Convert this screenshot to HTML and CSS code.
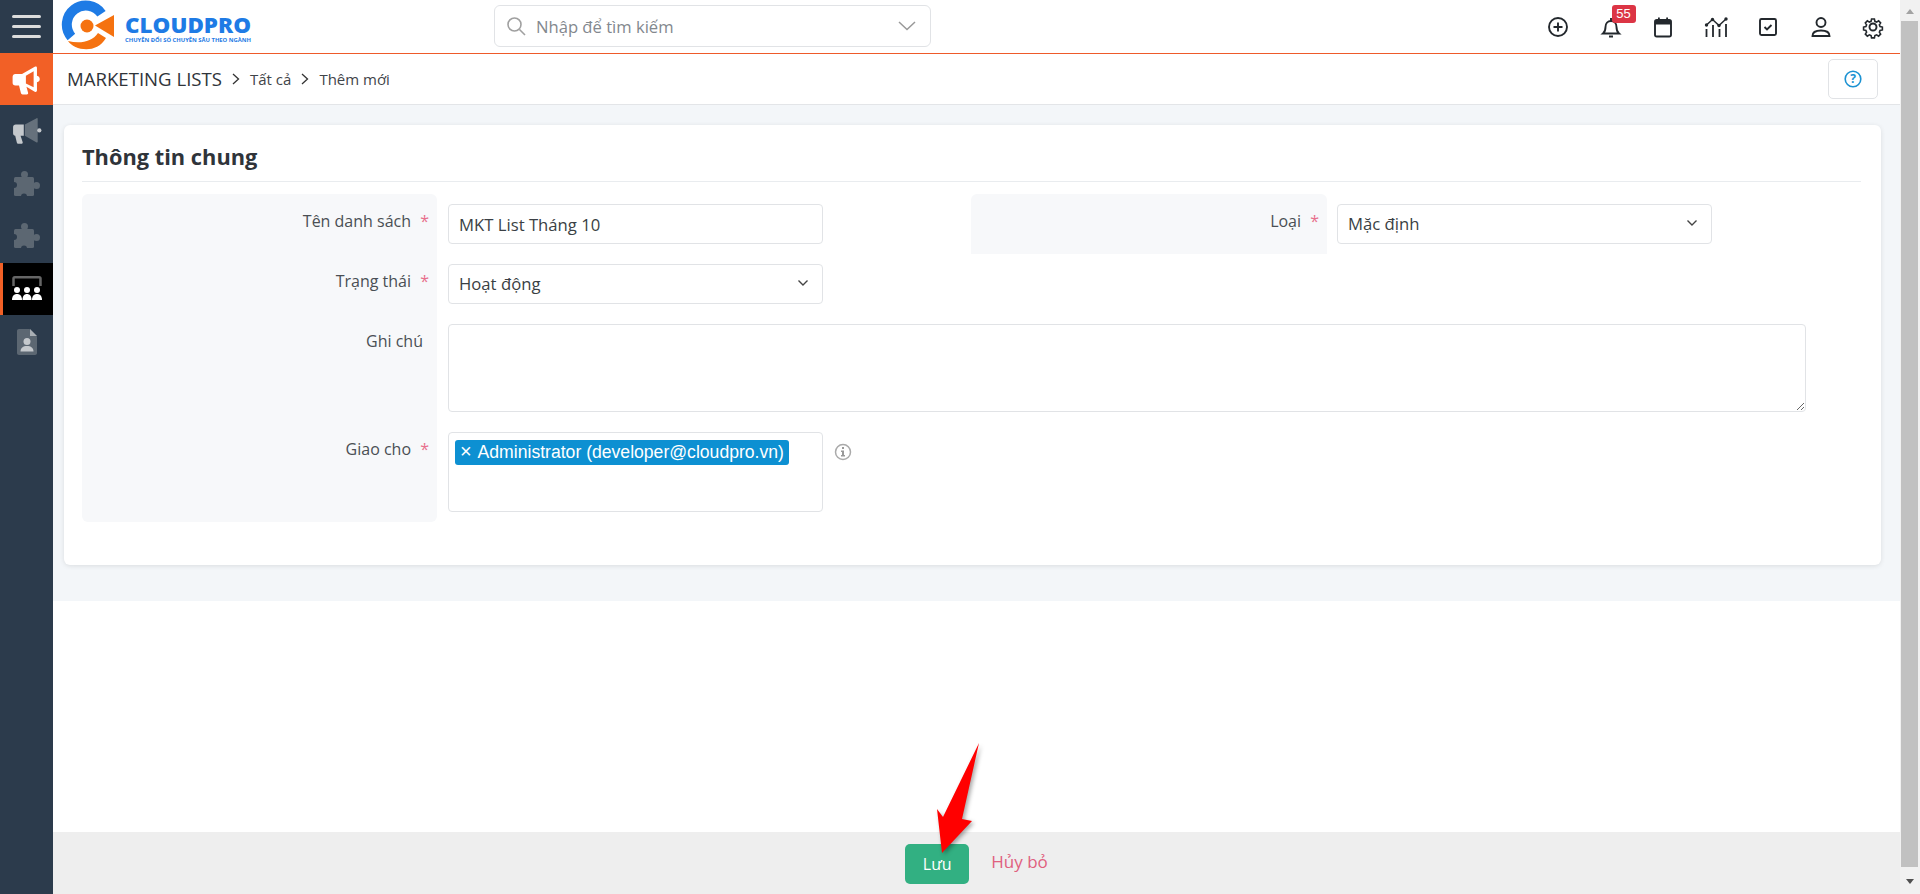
FILE: index.html
```html
<!DOCTYPE html>
<html>
<head>
<meta charset="UTF-8">
    <title>CloudPro - Marketing Lists</title>
    <link rel="stylesheet" href="styles.css">
</head>
<body>
    <div class="sidebar">
        <div class="menu-btn"><span></span><span></span><span></span></div>
        <div class="side-item active-module">
            <svg width="32" height="31" viewBox="0 0 28 28"><path fill="#fff" d="M1 11.500c0-1.500 1-2.500 2.500-2.500h6L21 2.500c1-.5 2-.2 2 1v7c1.800.5 2.500 1.500 2.500 3s-.7 2.500-2.500 3v7.500c0 1-1 1.500-2 1l-7.500-4.500 1.500 5.500c.2 1-.3 1.500-1.200 1.500H10c-.8 0-1.300-.4-1.500-1.200L6.800 19.500H3.500C2 19.500 1 18.500 1 17z"/><path fill="#f26026" d="M13 10.500l7-4v14.500l-7-3.500z"/></svg>
        </div>
        <div class="side-item">
            <svg width="30" height="30" viewBox="0 0 28 28"><path fill="#c4c8cc" d="M1 10.500C1 9 2 8 3.500 8H11v10.500H8l2 6c.2.800-.3 1.500-1.200 1.500H6c-.8 0-1.300-.4-1.500-1.200L3 18.500C1.800 18.200 1 17.300 1 16z"/><path fill="#66717c" d="M12 8l11-6c.6-.3 1 .1 1 .7V24c0 .6-.4 1-1 .7l-11-6.200z"/><circle cx="25.500" cy="13.500" r="2" fill="#c4c8cc"/></svg>
        </div>
        <div class="side-item">
            <svg width="28" height="28" viewBox="0 0 28 28"><g fill="#5c6772"><rect x="1" y="7" width="20" height="19" rx="1.500"/><circle cx="11.500" cy="4.500" r="3.500"/><circle cx="23.500" cy="15.500" r="3.500"/></g><circle cx="1" cy="15" r="3" fill="#2c3b4c"/><circle cx="11" cy="26.500" r="3" fill="#2c3b4c"/></svg>
        </div>
        <div class="side-item">
            <svg width="28" height="28" viewBox="0 0 28 28"><g fill="#5c6772"><rect x="1" y="7" width="20" height="19" rx="1.500"/><circle cx="11.500" cy="4.500" r="3.500"/><circle cx="23.500" cy="15.500" r="3.500"/></g><circle cx="1" cy="15" r="3" fill="#2c3b4c"/><circle cx="11" cy="26.500" r="3" fill="#2c3b4c"/></svg>
        </div>
        <div class="side-item current">
            <svg width="32" height="28" viewBox="0 0 32 28"><path fill="none" stroke="#666" stroke-width="2.500" d="M2.500 11V3.500c0-.8.500-1.300 1.300-1.300h24.400c.8 0 1.300.5 1.300 1.300V11"/><g fill="#fff"><circle cx="6" cy="15" r="3"/><path d="M1 25c0-4 2-6 5-6s5 2 5 6z"/><circle cx="16" cy="15" r="3"/><path d="M11.500 25c0-4 1.800-6 4.500-6s4.500 2 4.500 6z"/><circle cx="26" cy="15" r="3"/><path d="M21 25c0-4 2-6 5-6s5 2 5 6z"/></g></svg>
        </div>
        <div class="side-item">
            <svg width="22" height="28" viewBox="0 0 22 28"><path fill="#5c6772" d="M3 1h10.500L21 8.500V25c0 1.200-.8 2-2 2H3c-1.200 0-2-.8-2-2V3c0-1.200.8-2 2-2z"/><path fill="#a9afb5" d="M14 1l7 7h-7z"/><circle cx="11" cy="13.500" r="3.500" fill="#c4c8cc"/><path fill="#c4c8cc" d="M4.500 23.500c0-3.500 2.500-5.500 6.500-5.500s6.500 2 6.500 5.500z"/></svg>
        </div>
    </div>

    <div class="main">
        <div class="topbar">
            <svg class="logo" width="196" height="53" viewBox="0 0 196 53">
                <path fill="none" stroke="#1e7be5" stroke-width="10" d="M41.500 13.800A19 19 0 1 0 11.400 36.900"/>
                <path fill="#f57210" d="M8 41c6 9 28 14 38-3l-8-5c-6 9-18 11-30 8z"/>
                <circle cx="27" cy="26" r="6.500" fill="#f57210"/>
                <path fill="#f57210" d="M35 25.500L54 15v22z"/>
                <text class="logo-name" x="65" y="33" textLength="126" lengthAdjust="spacingAndGlyphs">CLOUDPRO</text>
                <text class="logo-sub" x="65" y="42" textLength="126" lengthAdjust="spacingAndGlyphs">CHUYÊN ĐỔI SỐ CHUYÊN SÂU THEO NGÀNH</text>
            </svg>
            <div class="search">
                <svg width="20" height="20" viewBox="0 0 20 20" fill="none" stroke="#a0a0a0" stroke-width="1.600"><circle cx="8.500" cy="8.500" r="6.500"/><path d="M13.500 13.500L19 19"/></svg>
                <span class="search-text">Nhập để tìm kiếm</span>
                <svg class="search-caret" width="18" height="10" viewBox="0 0 18 10" fill="none" stroke="#999" stroke-width="1.500"><path d="M1 1l8 7.500L17 1"/></svg>
            </div>
            <div class="top-icons">
                <svg width="24" height="24" viewBox="0 0 24 24" fill="none" stroke="#23282d" stroke-width="1.900"><circle cx="12" cy="12" r="9"/><path d="M12 7.500v9M7.500 12h9"/></svg>
                <div class="bell">
                    <svg width="24" height="24" viewBox="0 0 24 24" fill="none" stroke="#23282d" stroke-width="1.900"><path d="M4 18.500c1.800-1.500 2.500-3 2.500-6.500 0-3.700 2.300-6 5.500-6s5.500 2.300 5.500 6c0 3.500.7 5 2.500 6.500z"/><path d="M12 3v3M10 21.500h4"/></svg>
                    <span class="badge">55</span>
                </div>
                <svg width="24" height="24" viewBox="0 0 24 24"><rect x="4" y="5" width="16" height="16.500" rx="1.800" fill="none" stroke="#23282d" stroke-width="1.900"/><path fill="#23282d" d="M4 5h16v4.500H4zM7 2.500h1.800V5H7zM15.200 2.500H17V5h-1.800z"/></svg>
                <svg width="24" height="24" viewBox="0 0 24 24" fill="none" stroke="#23282d" stroke-width="1.800"><path d="M2.500 10L8.500 4.500l6.500 6 7-6.500" stroke-width="1.500"/><path d="M2.500 14v8M9 10v12M15.500 14v8M22 9v13"/><g fill="#23282d" stroke="none"><circle cx="2.500" cy="10" r="1.700"/><circle cx="8.500" cy="4.500" r="1.700"/><circle cx="15" cy="10.500" r="1.700"/><circle cx="22" cy="4" r="1.700"/></g></svg>
                <svg width="24" height="24" viewBox="0 0 24 24" fill="none" stroke="#23282d" stroke-width="1.900"><rect x="4" y="4" width="16" height="16" rx="1.500"/><path d="M8.500 12l2.500 2.500 4.500-4.500"/></svg>
                <svg width="24" height="24" viewBox="0 0 24 24" fill="none" stroke="#23282d" stroke-width="1.900"><circle cx="12" cy="7.500" r="4.500"/><path d="M3.500 21c0-4 3-5.500 8.500-5.500s8.500 1.500 8.500 5.500z"/></svg>
                <svg width="24" height="24" viewBox="0 0 24 24" fill="none" stroke="#23282d" stroke-width="1.900"><circle cx="12" cy="12" r="3.500"/><path d="M10.300 2.500h3.400l.6 2.800 2 .9 2.400-1.500 2.400 2.400-1.500 2.400.8 2 2.800.6v3.400l-2.800.6-.8 2 1.500 2.400-2.400 2.400-2.400-1.500-2 .8-.6 2.800h-3.400l-.6-2.800-2-.8-2.400 1.500-2.400-2.400 1.500-2.400-.8-2-2.800-.6v-3.400l2.800-.6.800-2-1.500-2.400 2.400-2.400 2.400 1.500 2-.9z" transform="translate(1.900 1.900) scale(.84)"/></svg>
            </div>
        </div>

        <div class="crumbbar">
            <span class="crumb-title">MARKETING LISTS</span>
            <svg class="crumb-sep" width="8" height="12" viewBox="0 0 8 12" fill="none" stroke="#333" stroke-width="1.300"><path d="M1 1l5.500 5L1 11"/></svg>
            <span class="crumb-link">Tất cả</span>
            <svg class="crumb-sep" width="8" height="12" viewBox="0 0 8 12" fill="none" stroke="#333" stroke-width="1.300"><path d="M1 1l5.500 5L1 11"/></svg>
            <span class="crumb-link">Thêm mới</span>
            <button class="help-btn">
                <svg width="20" height="20" viewBox="0 0 20 20"><circle cx="10" cy="10" r="7.800" fill="none" stroke="#1c92d2" stroke-width="1.600"/><text class="help-mark" x="10" y="14">?</text></svg>
            </button>
        </div>

        <div class="content">
            <div class="card">
                <h2 class="card-title">Thông tin chung</h2>
                <div class="form-grid">
                    <div class="label-cell first">Tên danh sách <span class="req">*</span></div>
                    <div class="control"><input class="field" type="text" value="MKT List Tháng 10"></div>
                    <div class="label-cell single">Loại <span class="req">*</span></div>
                    <div class="control last">
                        <div class="field select">Mặc định
                            <svg width="12" height="8" viewBox="0 0 12 8" fill="none" stroke="#444" stroke-width="1.400"><path d="M1.500 1.500l4.500 4.500 4.500-4.500"/></svg>
                        </div>
                    </div>

                    <div class="label-cell">Trạng thái <span class="req">*</span></div>
                    <div class="control wide">
                        <div class="field select">Hoạt động
                            <svg width="12" height="8" viewBox="0 0 12 8" fill="none" stroke="#444" stroke-width="1.400"><path d="M1.500 1.500l4.500 4.500 4.500-4.500"/></svg>
                        </div>
                    </div>

                    <div class="label-cell note">Ghi chú</div>
                    <div class="control wide"><textarea class="notes"></textarea></div>

                    <div class="label-cell final">Giao cho <span class="req">*</span></div>
                    <div class="control wide assign">
                        <div class="tagbox">
                            <span class="tag"><span class="tag-x">×</span> Administrator (developer@cloudpro.vn)</span>
                        </div>
                        <svg class="info" width="18" height="18" viewBox="0 0 18 18"><circle cx="9" cy="9" r="7.500" fill="none" stroke="#aaa" stroke-width="1.500"/><path fill="#999" d="M8 4h2v2H8zM7 7.500h3V12h1v1.500H7V12h1V9H7z"/></svg>
                    </div>
                </div>
            </div>
        </div>

        <div class="footer">
            <button class="save-btn">Lưu</button>
            <a class="cancel" href="#">Hủy bỏ</a>
        </div>
    </div>

    <div class="scrollbar">
        <div class="scroll-btn"><span class="arrow-up"></span></div>
        <div class="scroll-thumb"></div>
        <div class="scroll-btn bottom"><span class="arrow-down"></span></div>
    </div>

    <svg class="pointer" width="70" height="130" viewBox="0 0 70 130">
        <path fill="#f00" d="M54 3L37 79l10 2-30 32-5-44 6 8z"/>
    </svg>
</body>
</html>
```

FILE: styles.css
```css
* { box-sizing: border-box; }
html, body { height: 100%; }
body { margin: 0; display: flex; overflow: hidden; font-family: "Open Sans", "Noto Sans", sans-serif; font-size: 16px; color: #3a3f44; background: #fff; }

.sidebar { width: 53px; flex: none; background: #2c3b4c; }
.menu-btn { height: 53px; padding: 15px 12px 0; display: flex; flex-direction: column; gap: 7px; }
.menu-btn span { display: block; height: 3px; background: #dcdcdc; border-radius: 2px; }
.side-item { height: 52.6px; display: flex; align-items: center; justify-content: center; }
.side-item.active-module { height: 52px; background: #f26026; }
.side-item.current { background: #000; border-left: 3px solid #f26026; padding-right: 3px; }

.main { width: 1847px; flex: none; display: flex; flex-direction: column; }

.topbar { height: 54px; flex: none; display: flex; align-items: center; border-bottom: 1px solid #ee5a2a; padding-right: 15px; }
.logo { margin-left: 7px; flex: none; }
.logo-name { font-family: "Open Sans", sans-serif; font-weight: 800; font-size: 21px; fill: #1e7be5; }
.logo-sub { font-family: "Open Sans", sans-serif; font-weight: 700; font-size: 6px; fill: #1e7be5; }
.search { width: 437px; height: 42px; margin: 0 0 1px 238px; display: flex; align-items: center; border: 1px solid #e1e3e6; border-radius: 6px; padding: 0 14px 0 11px; }
.search-text { margin-left: 10px; font-size: 16.6px; color: #83888e; }
.search-caret { margin-left: auto; }
.top-icons { margin-left: auto; display: flex; align-items: center; gap: 28.5px; }
.bell { position: relative; height: 24px; }
.badge { position: absolute; left: 13px; top: -10px; width: 24px; height: 18px; background: #dc3545; color: #fff; border-radius: 3px; font-family: "Liberation Sans", sans-serif; font-size: 13px; line-height: 18px; text-align: center; }

.crumbbar { height: 51px; flex: none; display: flex; align-items: center; border-bottom: 1px solid #e3e5e8; padding: 0 22px 0 14px; }
.crumb-title { font-size: 18.6px; font-weight: 500; color: #2f343a; margin-bottom: 2px; }
.crumb-sep { margin: 0 10px; }
.crumb-link { font-size: 15px; color: #3f4449; }
.help-btn { margin-left: auto; width: 50px; height: 40px; background: #fff; border: 1px solid #e1e3e6; border-radius: 5px; padding: 0; display: flex; align-items: center; justify-content: center; }
.help-mark { font-family: "Open Sans", sans-serif; font-size: 12px; font-weight: 700; fill: #1c92d2; text-anchor: middle; }

.content { background: #f3f6f9; padding: 20px 19px 36px 11px; }
.card { height: 440px; background: #fff; border-radius: 6px; box-shadow: 0 1px 5px rgba(0,0,0,0.1); padding: 0 20px 0 18px; }
.card-title { margin: 0 0 12px; height: 57px; line-height: 63px; font-size: 21.8px; font-weight: 700; color: #2f343a; border-bottom: 1px solid #e9ecef; }

.form-grid { display: grid; grid-template-columns: 355px 534px 356px 1fr; grid-template-rows: 60px 60px 108px 100px; }
.label-cell { background: #f7f8fa; text-align: right; padding: 15px 8px 0 0; line-height: 24px; font-size: 16px; color: #4a4f54; }
.label-cell.first { border-radius: 6px 6px 0 0; }
.label-cell.final { border-radius: 0 0 6px 6px; }
.label-cell.single { border-radius: 6px 6px 0 0; }
.label-cell.note { padding-right: 14px; }
.req { color: #e8708c; margin-left: 5px; }
.control { padding: 10px 0 0 11px; }
.control.last { padding-left: 10px; }
.control.wide { grid-column: 2 / 5; }
.control.assign { display: flex; align-items: flex-start; }

.field { display: block; width: 375px; height: 40px; border: 1px solid #e1e3e6; border-radius: 4px; padding: 0 10px; font-family: inherit; font-size: 16.7px; color: #3a3f44; background: #fff; }
.select { display: flex; align-items: center; justify-content: space-between; padding-right: 13px; padding-bottom: 2px; }
.notes { display: block; width: 1358px; height: 88px; border: 1px solid #e1e3e6; border-radius: 4px; background: #fff; }
.tagbox { width: 375px; height: 80px; border: 1px solid #e1e3e6; border-radius: 4px; padding: 7px 6px; }
.tag { display: inline-block; height: 25px; line-height: 25px; background: #0d90d2; color: #fff; border-radius: 3px; padding: 0 5px; font-family: "Liberation Sans", sans-serif; font-size: 17.6px; white-space: nowrap; }
.tag-x { font-size: 20px; line-height: 20px; margin-right: 2px; }
.info { margin: 11px 0 0 11px; }

.footer { margin-top: auto; height: 62px; flex: none; background: #eee; display: flex; align-items: flex-start; justify-content: center; padding-top: 12px; gap: 22px; }
.save-btn { width: 64px; height: 40px; background: #32b082; color: #fff; border: none; border-radius: 5px; font-family: inherit; font-size: 16px; padding: 0; }
.cancel { line-height: 35px; font-size: 17px; color: #e0607e; text-decoration: none; }

.scrollbar { width: 20px; flex: none; background: #f1f1f1; display: flex; flex-direction: column; padding-left: 1px; padding-right: 2px; }
.scroll-btn { height: 21px; flex: none; display: flex; justify-content: center; padding-top: 9px; }
.scroll-btn.bottom { height: 27px; padding-top: 12px; }
.scroll-thumb { flex: 1; background: #c1c1c1; }
.arrow-up { width: 0; height: 0; border: 4.5px solid transparent; border-top: 0; border-bottom: 5px solid #a3a3a3; }
.arrow-down { width: 0; height: 0; border: 4.5px solid transparent; border-bottom: 0; border-top: 5px solid #505050; }

/* annotation arrow drawn over the page */
.pointer { position: absolute; left: 925px; top: 740px; filter: drop-shadow(2px 2px 2px rgba(0,0,0,0.35)); }
```
